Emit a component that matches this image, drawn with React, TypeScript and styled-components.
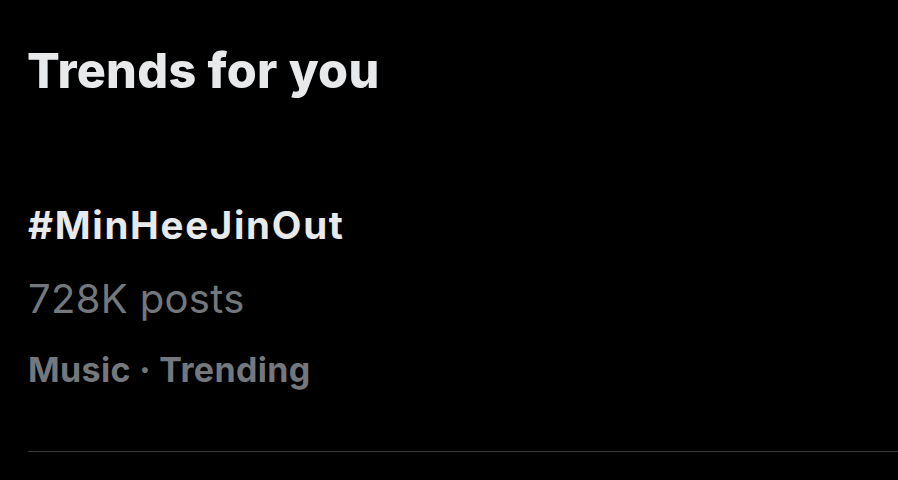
import React from 'react';
import styled, { createGlobalStyle } from 'styled-components';

const GlobalStyle = createGlobalStyle`
  html, body {
    margin: 0;
    padding: 0;
    background: #000;
  }
  body {
    font-family: Inter, "Noto Sans", "Liberation Sans", sans-serif;
    -webkit-font-smoothing: antialiased;
  }
`;

const Page = styled.div`
  width: 898px;
  height: 480px;
  background: #000;
  overflow: hidden;
  padding-left: 28px;
  box-sizing: border-box;
`;

const Heading = styled.h2`
  margin: 0 0 0 -1px;
  padding-top: 43px;
  font-size: 48.5px;
  line-height: 56px;
  font-weight: 800;
  color: #e7e9ea;
  letter-spacing: 0.3px;
`;

const TrendItem = styled.div`
  display: flex;
  flex-direction: column;
  padding-top: 103px;
  padding-bottom: 60px;
  border-bottom: 1px solid #3a3b3d;
`;

const Tag = styled.div`
  font-size: 38.5px;
  line-height: 46px;
  font-weight: 700;
  color: #e7e9ea;
  letter-spacing: 1.7px;
`;

const Meta = styled.div<{ $bold?: boolean }>`
  font-size: ${({ $bold }) => ($bold ? '34px' : '40px')};
  line-height: ${({ $bold }) => ($bold ? '42px' : '48px')};
  margin-top: ${({ $bold }) => ($bold ? '26px' : '27px')};
  font-weight: ${({ $bold }) => ($bold ? 700 : 400)};
  letter-spacing: 0.35px;
  color: #74777b;
`;

const App: React.FC = () => {
  return (
    <>
      <GlobalStyle />
      <Page>
        <Heading>Trends for you</Heading>
        <TrendItem>
          <Tag>#MinHeeJinOut</Tag>
          <Meta>728K posts</Meta>
          <Meta $bold>Music · Trending</Meta>
        </TrendItem>
      </Page>
    </>
  );
};

export default App;
